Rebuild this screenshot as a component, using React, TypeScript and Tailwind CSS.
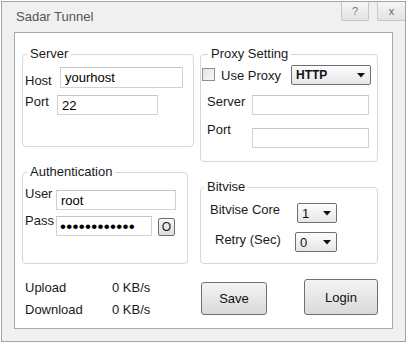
import React from "react";

const font = { fontFamily: '"Liberation Sans", Arial, sans-serif' };

function Arrow() {
  return (
    <svg width="8" height="5" viewBox="0 0 8 5" className="shrink-0">
      <path d="M0 0 H8 L4 4.5 Z" fill="#111" />
    </svg>
  );
}

function Select({ value, w, bold }: { value: string; w: string; bold?: boolean }) {
  return (
    <div
      className={`${w} h-[20px] flex items-center justify-between pl-[4px] pr-[5px] border border-[#6f6f6f] rounded-[2px] bg-gradient-to-b from-[#fdfdfd] to-[#e6e6e6] leading-[15px] text-[#111] ${bold ? "font-bold text-[12px]" : "text-[13px]"}`}
    >
      <span>{value}</span>
      <Arrow />
    </div>
  );
}

function Field({ value, w, h }: { value?: string; w: string; h: string }) {
  return (
    <div
      className={`${w} ${h} border border-[#d2d2d2] border-t-[#c4c4c4] bg-white flex items-center pl-[4px] text-[13px] leading-[15px] text-black`}
    >
      {value}
    </div>
  );
}

export default function App() {
  return (
    <div className="w-[408px] h-[346px] bg-white pt-[1px] pl-[1px] text-[13px] leading-[15px] text-[#1a1a1a]" style={font}>
      <div className="w-[405px] h-[341px] border border-[#a3a3a3] bg-[#f0f0f0] flex flex-col">
        {/* title bar */}
        <div className="h-[30px] flex items-start justify-between">
          <div className="mt-[7px] pl-[14px] text-[#555] text-[13px] leading-[15px]">Sadar Tunnel</div>
          <div className="flex gap-[8px]">
            <div className="w-[28px] h-[19px] border-x border-b border-[#c6c6c6] rounded-b-[2px] bg-gradient-to-b from-[#f6f6f6] to-[#e2e2e2] flex items-center justify-center text-[11px] text-[#777]">
              ?
            </div>
            <div className="w-[28px] h-[19px] border-l border-b border-[#c6c6c6] rounded-bl-[2px] bg-gradient-to-b from-[#f6f6f6] to-[#e2e2e2] flex items-center justify-center text-[11px] text-[#666]">
              x
            </div>
          </div>
        </div>

        {/* inner panel */}
        <div className="ml-[12px] w-[379px] h-[297px] border border-[#a9a9a9] bg-white flex pl-[7px] gap-[6px]">
          {/* left column */}
          <div className="w-[172px] flex flex-col">
            <fieldset className="mt-[13px] w-[172px] h-[101px] border border-[#d6d6d6] rounded-[4px]">
              <legend className="ml-[4px] px-[3px] text-[13px] leading-[16px]">Server</legend>
              <div className="mt-[5px] flex items-start">
                <div className="pl-[2px] w-[37px] mt-[6px]">Host</div>
                <Field value="yourhost" w="w-[123px]" h="h-[21px]" />
              </div>
              <div className="mt-[7px] flex items-start">
                <div className="pl-[2px] w-[34px] mt-[-1px]">Port</div>
                <Field value="22" w="w-[101px]" h="h-[20px]" />
              </div>
            </fieldset>

            <fieldset className="mt-[17px] w-[166px] h-[100px] border border-[#d6d6d6] rounded-[4px]">
              <legend className="ml-[4px] px-[3px] text-[13px] leading-[16px]">Authentication</legend>
              <div className="mt-[10px] flex items-start">
                <div className="pl-[2px] w-[33px] mt-[-4px]">User</div>
                <Field value="root" w="w-[120px]" h="h-[20px]" />
              </div>
              <div className="mt-[6px] flex items-start">
                <div className="pl-[2px] w-[33px] mt-[-3px]">Pass</div>
                <div className="w-[96px] h-[20px] border border-[#d2d2d2] border-t-[#c4c4c4] bg-white flex items-center pl-[3px] text-[17px] leading-[15px] tracking-[0.3px] text-black">
                  ••••••••••••
                </div>
                <div className="ml-[6px] mt-[2px] w-[17px] h-[18px] border border-[#707070] rounded-[2px] bg-gradient-to-b from-[#f6f6f6] to-[#dcdcdc] flex items-center justify-center text-[12px]">
                  O
                </div>
              </div>
            </fieldset>

            <div className="mt-[16px] ml-[3px] flex">
              <div className="w-[87px]">Upload</div>
              <div>0 KB/s</div>
            </div>
            <div className="mt-[7px] ml-[3px] flex">
              <div className="w-[87px]">Download</div>
              <div>0 KB/s</div>
            </div>
          </div>

          {/* right column */}
          <div className="w-[178px] flex flex-col">
            <fieldset className="mt-[13px] w-[178px] h-[116px] border border-[#d6d6d6] rounded-[4px]">
              <legend className="ml-[7px] px-[3px] text-[13px] leading-[16px]">Proxy Setting</legend>
              <div className="mt-[3px] flex items-start">
                <div className="ml-[1px] mt-[3px] w-[13px] h-[13px] border border-[#8e8f8f] bg-gradient-to-br from-[#e4e4e4] to-[#f7f7f7]" />
                <div className="ml-[6px] mt-[3px] w-[70px]">Use Proxy</div>
                <Select value="HTTP" w="w-[80px]" bold />
              </div>
              <div className="mt-[10px] flex items-start">
                <div className="pl-[6px] w-[51px] mt-[-1px]">Server</div>
                <Field w="w-[117px]" h="h-[20px]" />
              </div>
              <div className="mt-[13px] flex items-start">
                <div className="pl-[6px] w-[51px] mt-[-6px]">Port</div>
                <Field w="w-[117px]" h="h-[20px]" />
              </div>
            </fieldset>

            <fieldset className="mt-[17px] w-[178px] h-[85px] border border-[#d6d6d6] rounded-[4px]">
              <legend className="ml-[3px] px-[3px] text-[13px] leading-[16px]">Bitvise</legend>
              <div className="mt-[8px] flex items-start">
                <div className="pl-[9px] w-[96px] mt-[-1px]">Bitvise Core</div>
                <Select value="1" w="w-[40px]" />
              </div>
              <div className="mt-[9px] flex items-start">
                <div className="pl-[14px] w-[94px]">Retry (Sec)</div>
                <Select value="0" w="w-[42px]" />
              </div>
            </fieldset>

            <div className="mt-[15px] flex items-start">
              <button className="ml-[1px] mt-[3px] w-[66px] h-[33px] border border-[#707070] rounded-[3px] bg-gradient-to-b from-[#f4f4f4] to-[#d9d9d9] text-[13px] text-[#111]">
                Save
              </button>
              <button className="ml-[37px] w-[74px] h-[36px] border border-[#707070] rounded-[3px] bg-gradient-to-b from-[#f4f4f4] to-[#d9d9d9] text-[13px] text-[#111]">
                Login
              </button>
            </div>
          </div>
        </div>
      </div>
    </div>
  );
}
